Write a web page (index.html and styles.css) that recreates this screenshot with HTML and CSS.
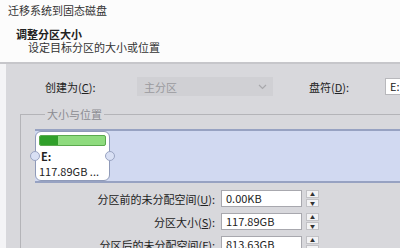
FILE: index.html
```html
<!DOCTYPE html>
<html lang="zh-CN">
<head>
    <meta charset="UTF-8">
    <title>迁移系统到固态磁盘</title>
    <link rel="stylesheet" href="styles.css">
</head>
<body>
    <div class="header">
        <div class="win-title">迁移系统到固态磁盘</div>
        <div class="head-title">调整分区大小</div>
        <div class="head-sub">设定目标分区的大小或位置</div>
    </div>
    <div class="main">
        <div class="edge"></div>
        <div class="content">
            <div class="top-row">
                <span class="lbl-create">创建为(<u>C</u>):</span>
                <div class="combo">
                    <span>主分区</span>
                    <svg width="9" height="6" viewBox="0 0 9 6"><path d="M1 1 L4.5 4.5 L8 1" fill="none" stroke="#a8a8ac" stroke-width="1.2"/></svg>
                </div>
                <span class="lbl-drive">盘符(<u>D</u>):</span>
                <div class="drive-input">E:</div>
            </div>
            <fieldset class="group">
                <legend>大小与位置</legend>
                <div class="band">
                    <div class="part">
                        <span class="handle left"></span>
                        <div class="usage"><div class="used"></div></div>
                        <div class="part-name">E:</div>
                        <div class="part-size">117.89GB ...</div>
                        <span class="handle right"></span>
                    </div>
                </div>
                <div class="field">
                    <span class="flabel">分区前的未分配空间(<u>U</u>):</span>
                    <div class="finput">0.00KB</div>
                    <div class="spin"><span>&#9650;</span><span>&#9660;</span></div>
                </div>
                <div class="field">
                    <span class="flabel">分区大小(<u>S</u>):</span>
                    <div class="finput">117.89GB</div>
                    <div class="spin"><span>&#9650;</span><span>&#9660;</span></div>
                </div>
                <div class="field">
                    <span class="flabel">分区后的未分配空间(<u>F</u>):</span>
                    <div class="finput">813.63GB</div>
                    <div class="spin"><span>&#9650;</span><span>&#9660;</span></div>
                </div>
            </fieldset>
        </div>
    </div>
</body>
</html>
```
FILE: styles.css
```css
body {
    margin: 0;
    background-color: #d8d8dc;
    color: #222;
    font-family: "Noto Sans CJK SC", "Noto Sans", sans-serif;
    font-size: 11px;
    overflow: hidden;
    height: 248px;
}
.header {
    background-color: #fcfcfc;
    height: 64px;
    border-bottom: 2px solid #c6c6ca;
    box-sizing: border-box;
}
.win-title {
    padding: 2px 0 0 8px;
    line-height: 16px;
    color: #333;
}
.head-title {
    padding-left: 16px;
    margin-top: 10px;
    line-height: 13px;
    font-weight: bold;
}
.head-sub {
    padding-left: 28px;
    line-height: 13px;
    color: #333;
}
.main {
    display: flex;
}
.edge {
    width: 6px;
    height: 200px;
    background-color: #f4f4f6;
    flex: none;
}
.content {
    flex: 1;
    min-width: 0;
    padding-left: 14px;
}
.top-row {
    display: flex;
    align-items: center;
    height: 19px;
    margin-top: 13px;
}
.lbl-create {
    padding-left: 25px;
    width: 92px;
    flex: none;
}
.combo {
    width: 136px;
    height: 19px;
    box-sizing: border-box;
    background-color: #d0d0d4;
    color: #9a9a9e;
    display: flex;
    align-items: center;
    justify-content: space-between;
    padding: 0 6px 0 7px;
    flex: none;
}
.lbl-drive {
    margin-left: 36px;
    width: 76px;
    flex: none;
}
.drive-input {
    width: 40px;
    height: 17px;
    box-sizing: border-box;
    background-color: #fff;
    border: 1px solid #b8b8bc;
    padding-left: 4px;
    line-height: 15px;
    flex: none;
}
u {
    text-decoration: underline;
}
.group {
    margin: 12px 0 0 0;
    padding: 0 0 0 14px;
    border: 1px solid #b4b4b8;
    border-right: none;
    min-width: 0;
}
.group legend {
    padding: 0 2px;
    margin-left: 10px;
    color: #8c8c92;
    line-height: 12px;
}
.band {
    margin-top: 9px;
    height: 54px;
    background-color: #d1d9f1;
    border-top: 2px solid #97a2c2;
    border-bottom: 2px solid #97a2c2;
    box-sizing: border-box;
    position: relative;
}
.part {
    position: absolute;
    left: 0;
    top: 0;
    width: 75px;
    height: 50px;
    box-sizing: border-box;
    background-color: #fff;
    border: 1px solid #8f9ab8;
    border-radius: 6px;
    padding: 3px 3px 0 3px;
}
.usage {
    height: 11px;
    box-sizing: border-box;
    background-color: #8edb7e;
    border: 1px solid #5aa94d;
    border-radius: 2px;
    overflow: hidden;
}
.used {
    width: 28%;
    height: 100%;
    background-color: #30a02a;
}
.part-name {
    font-weight: bold;
    line-height: 14px;
    margin-top: 3px;
    padding-left: 2px;
}
.part-size {
    line-height: 14px;
    margin-top: 1px;
}
.handle {
    position: absolute;
    top: 19px;
    width: 10px;
    height: 10px;
    box-sizing: border-box;
    border-radius: 50%;
    border: 1px solid #9aa4c2;
    background-color: #d9e0f4;
}
.handle.left { left: -6px; }
.handle.right { right: -6px; }
.field {
    display: flex;
    align-items: center;
    margin-top: 7px;
    height: 17px;
}
.field + .field {
    margin-top: 6px;
}
.flabel {
    width: 180px;
    text-align: right;
    flex: none;
}
.finput {
    margin-left: 6px;
    width: 81px;
    height: 17px;
    box-sizing: border-box;
    background-color: #fff;
    border: 1px solid #a8a8ae;
    padding-left: 4px;
    line-height: 15px;
    flex: none;
}
.spin {
    margin-left: 4px;
    width: 13px;
    height: 17px;
    display: flex;
    flex-direction: column;
    gap: 1px;
    flex: none;
}
.spin span {
    flex: 1;
    background-color: #f2f2f4;
    border: 1px solid #c2c2c6;
    font-size: 5px;
    line-height: 6px;
    text-align: center;
    color: #333;
}
```
